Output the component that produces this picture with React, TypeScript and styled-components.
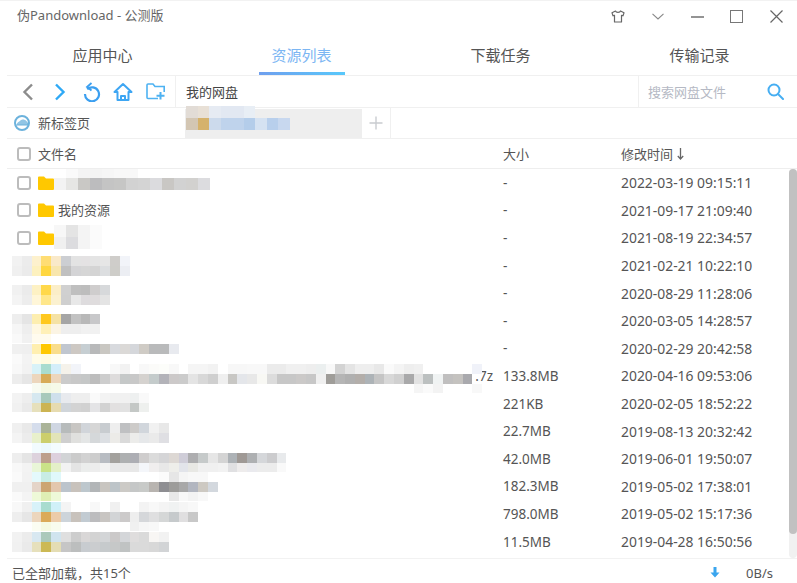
import React from "react";
import styled, { createGlobalStyle } from "styled-components";

const GlobalStyle = createGlobalStyle`
  html, body {
    margin: 0;
    padding: 0;
    background: #fff;
  }
  * {
    box-sizing: border-box;
  }
`;

const Window = styled.div`
  width: 797px;
  height: 583px;
  overflow: hidden;
  display: flex;
  flex-direction: column;
  background: #fff;
  color: #555;
  font-family: "Noto Sans", "Noto Sans CJK SC", sans-serif;
  font-size: 13px;
  border-top: 1px solid #f2f2f2;
`;

const TitleBar = styled.div`
  height: 31px;
  flex: none;
  display: flex;
  align-items: center;
  justify-content: space-between;
  padding-left: 17px;
`;

const Title = styled.span`
  font-size: 13px;
  color: #666;
  padding-bottom: 4px;
`;

const WindowButtons = styled.div`
  display: flex;
  margin-right: 1px;
`;

const WindowButton = styled.div`
  width: 39.5px;
  height: 31px;
  display: flex;
  align-items: center;
  justify-content: center;
  color: #777;
`;

const MainTabs = styled.div`
  height: 43px;
  flex: none;
  margin-left: 3px;
  display: grid;
  grid-template-columns: repeat(4, 199px);
`;

const MainTab = styled.div<{ $active?: boolean }>`
  position: relative;
  display: flex;
  align-items: center;
  justify-content: center;
  padding-top: 2px;
  font-size: 15px;
  color: ${(p) => (p.$active ? "#7cb6f3" : "#555")};

  ${(p) =>
    p.$active &&
    `
    &::after {
      content: "";
      position: absolute;
      left: 57px;
      bottom: 0;
      width: 86px;
      height: 3px;
      background: linear-gradient(90deg, #6f9fee, #58c8fb);
    }
  `}
`;

const Toolbar = styled.div`
  height: 33px;
  flex: none;
  margin-left: 7px;
  display: flex;
  border-top: 1px solid #f0f0f0;
  border-bottom: 1px solid #f0f0f0;
`;

const NavButtons = styled.div`
  width: 169px;
  flex: none;
  display: flex;
  align-items: center;
  padding-left: 11.5px;
  gap: 12.5px;
  border-right: 1px solid #f0f0f0;
`;

const PathLabel = styled.div`
  flex: 1;
  display: flex;
  align-items: center;
  padding-left: 10px;
  font-size: 13px;
  color: #444;
`;

const SearchBox = styled.div`
  width: 159px;
  flex: none;
  display: flex;
  align-items: center;
  justify-content: space-between;
  padding: 0 13px 0 9px;
  border-left: 1px solid #f0f0f0;
  font-size: 13px;
  color: #b5b9c4;
`;

const PageTabs = styled.div`
  height: 31px;
  flex: none;
  margin-left: 7px;
  display: flex;
  align-items: stretch;
  border-bottom: 1px solid #f0f0f0;
  position: relative;
`;

const PageTab = styled.div`
  width: 178px;
  flex: none;
  display: flex;
  align-items: center;
  gap: 8px;
  padding-left: 7px;
  padding-bottom: 1px;
  font-size: 13px;
  color: #555;
`;

const ActivePageTab = styled.div`
  width: 177px;
  flex: none;
  background: #eeeeee;
  margin-top: 1px;
`;

const AddTab = styled.div`
  width: 29px;
  flex: none;
  display: flex;
  align-items: center;
  justify-content: center;
  border-right: 1px solid #f0f0f0;
`;

const ListHeader = styled.div`
  height: 30px;
  flex: none;
  margin-left: 7px;
  display: grid;
  grid-template-columns: 486px 118px 1fr;
  align-items: center;
  padding-left: 10px;
  border-bottom: 1px solid #eeeeee;
  font-size: 13px;
  color: #555;
`;

const NameHead = styled.div`
  display: flex;
  align-items: center;
  gap: 7px;
`;

const SortHead = styled.div`
  display: flex;
  align-items: center;
  gap: 4px;
`;

const Checkbox = styled.span`
  width: 14px;
  height: 14px;
  flex: none;
  display: block;
  border: 2px solid #bcbcbc;
  border-radius: 3px;
  background: #fff;
`;

const ListBody = styled.div`
  flex: 1;
  min-height: 0;
  display: flex;
`;

const Rows = styled.div`
  flex: 1;
  min-width: 0;
  overflow: hidden;
`;

const Row = styled.div`
  height: 27.6px;
  position: relative;
  display: grid;
  grid-template-columns: 503px 118px 1fr;
  align-items: center;
  font-size: 13px;
  color: #555;
`;

const NameCell = styled.div`
  display: flex;
  align-items: center;
  padding-left: 17px;
  padding-right: 10px;
`;

const FolderName = styled.span`
  margin-left: 4px;
  padding-bottom: 1px;
`;

const FolderSlot = styled.span`
  display: flex;
  margin-left: 7px;
`;

const FileExt = styled.span`
  margin-left: auto;
  font-size: 13.5px;
`;

const SizeCell = styled.span`
  font-size: 13.5px;
`;

const TimeCell = styled.span`
  font-size: 13.9px;
`;

const Mosaic = styled.div<{ $x: number; $y: number }>`
  position: absolute;
  left: ${(p) => p.$x}px;
  top: ${(p) => p.$y}px;
  display: flex;
  flex-direction: column;
  filter: blur(0.4px);
`;

const MosaicLine = styled.div`
  display: flex;
`;

const MosaicCell = styled.span<{ $w: number; $h: number }>`
  display: block;
  flex: none;
  width: ${(p) => p.$w}px;
  height: ${(p) => p.$h}px;
`;

const TabMosaic = styled(Mosaic)`
  z-index: 1;
`;

const ScrollTrack = styled.div`
  width: 8px;
  flex: none;
  background: #f1f1f1;
  border-radius: 4px;
  padding-bottom: 24px;
  display: flex;
`;

const ScrollThumb = styled.div`
  flex: 1;
  background: #c1c1c1;
  border-radius: 4px;
`;

const Footer = styled.div`
  height: 25px;
  flex: none;
  margin-left: 7px;
  display: flex;
  align-items: center;
  justify-content: space-between;
  padding: 3px 24px 0 5px;
  border-top: 1px solid #f2f2f2;
  font-size: 13px;
  color: #555;
`;

const Speed = styled.div`
  display: flex;
  align-items: center;
  gap: 26px;
`;

const Folder = () => (
  <svg width="16" height="14" viewBox="0 0 16 14">
    <path d="M0 1.5A1 1 0 0 1 1 .5h5l2 2h7a1 1 0 0 1 1 1V13a1 1 0 0 1-1 1H1a1 1 0 0 1-1-1z" fill="#ffc800" />
  </svg>
);

type Blur = { x: number; y: number; w?: number; h?: number; lines: string[] };

type FileRow = {
  folder?: boolean;
  name?: string;
  ext?: string;
  size: string;
  time: string;
  blur?: Blur;
};

const gap = (n: number) => "- ".repeat(n);

const files: FileRow[] = [
  {
    folder: true,
    size: "-",
    time: "2022-03-19 09:15:11",
    blur: {
      x: 54,
      y: 166,
      w: 12,
      h: 12,
      lines: [
        "- fafafa f4f4f4 f4f4f4 f6f6f6 f8f8f8 f8f8f8",
        "f3f3f3 e6e6e4 c9c8c5 bcbcbe c4c4c4 c6c6c5 d2d2d2 d4d4d4 dbdbde c9c7c4 d2d2d2 d2d1cf dcdcdf",
      ],
    },
  },
  { folder: true, name: "我的资源", size: "-", time: "2021-09-17 21:09:40" },
  {
    folder: true,
    size: "-",
    time: "2021-08-19 22:34:57",
    blur: {
      x: 54,
      y: 225,
      w: 12,
      h: 12,
      lines: ["f7f7f7 e4e4e4 f4f4f4 fbfbfb", "f0f0f0 dcdcdf f4f4f4 fbfbfb"],
    },
  },
  {
    size: "-",
    time: "2021-02-21 10:22:10",
    blur: {
      x: 12,
      y: 256,
      lines: [
        "f2f2f2 ececec fdf1cd ffdd73 f9e9c9 ccced2 e3e3e3 e4e2e3 e4e4e4 e6e6e6 cfcdca f2f4f9",
        "f0f0f0 ebebeb fdf1bf ffd740 f8e6ad c0c0c0 d4d4d6 d6d6d6 d4d4d4 dcdee0 cecdc9 eceef3",
      ],
    },
  },
  {
    size: "-",
    time: "2020-08-29 11:28:06",
    blur: {
      x: 12,
      y: 285,
      lines: [
        "f1f1f1 ebebeb fdf1c4 ffd84a fbeec8 d0d0d0 bfbfbf bdbdbd cfcdcd d7d9db",
        "f4f4f4 ededed fff6d8 ffe78a fbf1d0 cfcfcf e8e8e8 dedcde dfdcdd e4e4e4",
      ],
    },
  },
  {
    size: "-",
    time: "2020-03-05 14:28:57",
    blur: {
      x: 12,
      y: 314,
      lines: [
        "eeeeee e5e5e5 fdeeb0 ffc81f f5e2a5 a5a5a5 c2c2c2 b8b8b8 c8c8ca",
        "f6f6f6 eeeeee fff8e2 fff0b8 fbf4e4 eeeeee eeeeee f1f1f1 f1f1f1",
        "f9f9f9 f1f1f1 fffbee fffbee",
      ],
    },
  },
  {
    size: "-",
    time: "2020-02-29 20:42:58",
    blur: {
      x: 12,
      y: 344,
      lines: [
        "f0f0f0 efefef ffefb0 ffc800 f9dd8c c0c6cf cdc8c3 c6ced2 b8b9ba c9c7c2 d8dade dbd9d7 d5d7db cfcbc5 b9babb b9babb e8eaef",
        "fafafa f3f3f3 fffce8 fffbe0 fffdf0",
      ],
    },
  },
  {
    ext: ".7z",
    size: "133.8MB",
    time: "2020-04-16 09:53:06",
    blur: {
      x: 12,
      y: 364,
      lines: [
        "f8f8f8 f2f2f2 d8f2f8 a9dccf d4eefa f5f2ea f2f4f9 - - - f8f8f8 f2f2f2 - f8f8f8 fbfbf9 fcfdfa f8f8f8 - f5f5f5 f5f5f5 f2f2f2 - f7f7f7 f7f7f7 f8f8f8 f8f8f8 ebebeb ebebeb f0f0f0 f0f0f0 eeeeee ebefef f8f8f8 d3d3d3 e4e4e4 eeeeee eeeeee e8e8e8 fafafa f4f4f4 eeeeee f0f0f0 - - - - - f0f2f9",
        "ededed e6e6e6 ecd6bd d7ab58 edd6bc cbcbcb c8c8c8 c5c7c7 bdbdbd cdcdcd dedcdc c5c8c8 c8c8c8 d5d2cf c4cbcb b3b3b9 ccc9c9 cbcbcb e4e4e4 d8d8d8 cfcfcf efefef c8c7c4 e4e6ea e8e8e8 f8f8f4 dcdcdc c7c7c7 c7c7c7 cbc9c8 c7c7c7 f0f0f0 9f9d99 b5b5b5 b0b0b0 b3aeaa adb3b7 c5c5c5 d8d8d8 d0d0d0 a9a9aa e2e2e2 bcc0c0 f0f3f3 c0bfbf c4c2bf a9a9ad",
        `${gap(41)}f5f5f5 fafafa f3f3f3 - - - f8f8f8`,
      ],
    },
  },
  {
    size: "221KB",
    time: "2020-02-05 18:52:22",
    blur: {
      x: 12,
      y: 383,
      lines: [
        "- - f8fbf2 f2f8e4 f6fae8",
        "f3f3f3 eeeeee d6e8f0 a8c9bb cfe0ec e8eaee eeeeee eeeeee fafafa f3f3f3 f1f1f1 f1f1f1 eef0f0 f9f9f9",
        "f1f1f1 eaeaea e6e0bc ccb452 e6dbb0 d0d5da d3d3d3 d1d1d1 e4e4e6 d2d2d2 e2e0e0 e2e2e2 c4c8c6 eef0ee",
      ],
    },
  },
  {
    size: "22.7MB",
    time: "2019-08-13 20:32:42",
    blur: {
      x: 12,
      y: 423,
      lines: [
        "f0f0f0 e9e9e9 d5ddec aab398 cfd6e2 b7bbbb c8c6c3 d1d5da d6d6d6 c8ccd0 eeeeee bfc0c2 cdcbc9 d1d6dc f1f1f1 e8e8e8",
        "f4f4f4 ececec e8f0cc ccce6c e2e4b8 cfcfcf e0e0de e4e6e6 d5d8da dcdfe3 ecebe8 dadada ececea e6e8ea eaeaea dfdfe3",
      ],
    },
  },
  {
    size: "42.0MB",
    time: "2019-06-01 19:50:07",
    blur: {
      x: 12,
      y: 443,
      lines: [
        "- - f2fbfe ecf8fc f4fcfe",
        "eeeeee e5e5e5 ddd2dd bd9f8c ddd0dd d2d4d6 cbcbcb d2d2d2 cdcdcd b8bcc2 a3a19d aeb0b1 adaeb4 cfcdcd dbdbdb d5d5d7 ddd8d4 cfcdd8 aeaeb0 c6caca e6e6e6 d4d4d4 adb2b6 9f9995 aeb0b2 d5d7da ccccce e8eaec",
        "f8f8f8 f3f3f3 e9f6d8 cae288 e4f0c8 f2f2f2 e4e4e4 ebedec ededed f2f2f2 e8e8e8 e8e8e8 e8e8e8 f4f6fa f0eeee e8e8e8 eeeeea e2e4ea e8e8e4 f0f0f0 f0f0f0 f2f2f2 e0e0e2 eeecec eaeaee ececec ececec f9f9f9",
      ],
    },
  },
  {
    size: "182.3MB",
    time: "2019-05-02 17:38:01",
    blur: {
      x: 12,
      y: 472,
      lines: [
        `fafafa f2f2f2 e4f9fc c8ece4 e0f8fb ${gap(10)}fbfbfb e6e6e6 f5f5f5 f8f8f8 f8f8f8`,
        "f0f0f0 f0f0f0 e4d4c8 cca572 e3c7ae bcc4cc c8c2bc bdc7cd b2b5b7 c8c5c0 bdc4c8 cccac6 c5c7c7 c8cac8 b8b4b0 8e8e92 9d9c9a a8a8a8 b2b6c0 cdc9c2 d3d8de",
        `fafafa f4f4f4 eef9d8 dfeeb4 eef9d8 ${gap(11)}e8e8e8 f8f8f8 f3f3f3 f8f8f8`,
      ],
    },
  },
  {
    size: "798.0MB",
    time: "2019-05-02 15:17:36",
    blur: {
      x: 12,
      y: 502,
      lines: [
        "f8f8f8 f0f0f0 d8f2f9 a9dccf d0f0f8 f4f4f4 - - f8f8f8 - f0f0f0 - - f3f3f3 f8f8f8 f4f4f4 f0f2f2 f5f5f5 f8f8f8",
        "eeeeee e6e6e6 ecd6bd dbaa58 ecccaa cdd4da c8c2bc c2cbd2 bcbcbe c8c5c2 d2d4d6 cccaca eeeeee d5d7da dfdfe0 d5d7d7 c6cacc e0dfe0 c8c8c8",
        `- - fbfdf2 f5fae2 f8fcee ${gap(7)}f0f0f0 f6f6f6 f8f8f8`,
      ],
    },
  },
  {
    size: "11.5MB",
    time: "2019-04-28 16:50:56",
    blur: {
      x: 12,
      y: 532,
      lines: [
        "f2f2f2 ececec d8e8f1 abc9bb d0e4ef dfdfdf cdcdcd d9d7d7 d3d3d3 d3d5d7 cbc9c9 d4d6d9 dfdddd dadada f8f6f4 f2f2f2",
        "f1f1f1 eaeaea e6e0bc ccb955 e4ddb4 c6c6c6 bcbebe c8ccd0 cbcdcf c6cacc c6c8c8 c0c3c3 dadada dadada d8d8d8 d2d4d6",
      ],
    },
  },
];

const FIRST_ROW_TOP = 169;
const ROW_HEIGHT = 27.6;

const BlurLines = ({ lines, w = 9.8, h = 9.8 }: { lines: string[]; w?: number; h?: number }) => (
  <>
    {lines.map((line, i) => (
      <MosaicLine key={i}>
        {line
          .trim()
          .split(" ")
          .map((c, j) => (
            <MosaicCell
              key={j}
              $w={w}
              $h={h}
              style={{ backgroundColor: c === "-" ? "transparent" : `#${c}` }}
            />
          ))}
      </MosaicLine>
    ))}
  </>
);

const App: React.FC = () => {
  return (
    <Window>
      <GlobalStyle />
      <TitleBar>
        <Title>伪Pandownload - 公测版</Title>
        <WindowButtons>
          <WindowButton>
            <svg width="14" height="13" viewBox="0 0 14 13" fill="none" stroke="#666" strokeWidth="1.2" strokeLinejoin="round">
              <path d="M4.5 1 1 2.8l1 3 1.5-.5V12h7V5.3l1.5.5 1-3L9.5 1C9 2.8 5 2.8 4.5 1z" />
            </svg>
          </WindowButton>
          <WindowButton>
            <svg width="12" height="7" viewBox="0 0 12 7" fill="none" stroke="#888" strokeWidth="1.1">
              <path d="M.5.8 6 6l5.500-5.200" />
            </svg>
          </WindowButton>
          <WindowButton>
            <svg width="13" height="2" viewBox="0 0 13 2">
              <path d="M0 1h13" stroke="#666" strokeWidth="1.4" />
            </svg>
          </WindowButton>
          <WindowButton>
            <svg width="13" height="13" viewBox="0 0 13 13" fill="none" stroke="#777" strokeWidth="1">
              <rect x=".5" y=".5" width="12" height="12" />
            </svg>
          </WindowButton>
          <WindowButton>
            <svg width="13" height="13" viewBox="0 0 13 13" fill="none" stroke="#666" strokeWidth="1.2">
              <path d="m.5.500 12 12M12.500.500l-12 12" />
            </svg>
          </WindowButton>
        </WindowButtons>
      </TitleBar>

      <MainTabs>
        <MainTab>应用中心</MainTab>
        <MainTab $active>资源列表</MainTab>
        <MainTab>下载任务</MainTab>
        <MainTab>传输记录</MainTab>
      </MainTabs>

      <Toolbar>
        <NavButtons>
          <svg width="19" height="20" viewBox="0 0 19 20" fill="none" stroke="#8c8c8c" strokeWidth="2.400">
            <path d="M13 2.500 5.500 10l7.500 7.500" />
          </svg>
          <svg width="19" height="20" viewBox="0 0 19 20" fill="none" stroke="#2ea9f6" strokeWidth="2.400">
            <path d="M6 2.500 13.500 10 6 17.500" />
          </svg>
          <svg width="19" height="20" viewBox="0 0 19 20" fill="none" stroke="#3b9ff0" strokeWidth="2.200">
            <path d="M5.200 7.200A7 7 0 1 1 3 12" />
            <path d="M9.500 1 5 5l4.500 3.500" strokeWidth="1.800" />
          </svg>
          <svg width="20" height="20" viewBox="0 0 20 20" fill="none" stroke="#3ea6f3" strokeWidth="2">
            <path d="M1.500 10 10 2l8.500 8h-3v8h-11v-8zM8 18v-4h4v4" strokeLinejoin="round" />
          </svg>
          <svg width="20" height="18" viewBox="0 0 20 18" fill="none" stroke="#4eb2f2" strokeWidth="1.600">
            <path d="M12 15.500H2a1 1 0 0 1-1-1V2a1 1 0 0 1 1-1h5l2 2.500h9.200V9" />
            <path d="M14.500 9v7.500M10.500 12.800h8" strokeWidth="2" />
          </svg>
        </NavButtons>
        <PathLabel>我的网盘</PathLabel>
        <SearchBox>
          搜索网盘文件
          <svg width="17" height="17" viewBox="0 0 17 17" fill="none" stroke="#46aef2" strokeWidth="2">
            <circle cx="7" cy="7" r="5.500" />
            <path d="m11 11 5 5" strokeLinecap="round" />
          </svg>
        </SearchBox>
      </Toolbar>

      <PageTabs>
        <PageTab>
          <svg width="16" height="16" viewBox="0 0 16 16">
            <circle cx="8" cy="8" r="7" fill="none" stroke="#6cb2dc" strokeWidth="2" />
            <path d="M2 10.500C3 7.500 5 6.800 6.500 5.500 8.500 3.800 12 4.500 13 7c1 .5 1.500 2 1 3.500z" fill="#6cb2dc" />
            <path d="M2.500 9.500C4 6.500 6 6 7.500 5c2-1 4-.2 5 1.800.5.500 1.200 1.500 1 2.700z" fill="#fff" opacity="0.25" />
          </svg>
          新标签页
        </PageTab>
        <ActivePageTab />
        <AddTab>
          <svg width="14" height="14" viewBox="0 0 14 14">
            <path d="M7 .5v13M.5 7h13" stroke="#c9ccd0" strokeWidth="1.400" />
          </svg>
        </AddTab>
        <TabMosaic $x={179} $y={-2}>
          <BlurLines
            w={11.500}
            h={12}
            lines={[
              "e2dcd6 e8e0d6 e6ebf3 e2e8f2 e2e8f2 e8eef5",
              "d3c6b3 d5b26c ccdaec bfd3ec bfd3ec b4cdea d5e2f2 b8cfec c8d8ef",
            ]}
          />
        </TabMosaic>
      </PageTabs>

      <ListHeader>
        <NameHead>
          <Checkbox />
          文件名
        </NameHead>
        <span>大小</span>
        <SortHead>
          修改时间
          <svg width="7" height="12" viewBox="0 0 7 12" fill="none" stroke="#666" strokeWidth="1.300">
            <path d="M3.500 0v11M.8 8l2.700 3L6.200 8" />
          </svg>
        </SortHead>
      </ListHeader>

      <ListBody>
        <Rows>
          {files.map((file, i) => (
            <Row key={file.time}>
              <NameCell>
                {file.folder && (
                  <>
                    <Checkbox />
                    <FolderSlot>
                      <Folder />
                    </FolderSlot>
                  </>
                )}
                {file.name && <FolderName>{file.name}</FolderName>}
                {file.ext && <FileExt>{file.ext}</FileExt>}
              </NameCell>
              <SizeCell>{file.size}</SizeCell>
              <TimeCell>{file.time}</TimeCell>
              {file.blur && (
                <Mosaic $x={file.blur.x} $y={file.blur.y - (FIRST_ROW_TOP + i * ROW_HEIGHT)}>
                  <BlurLines lines={file.blur.lines} w={file.blur.w} h={file.blur.h} />
                </Mosaic>
              )}
            </Row>
          ))}
        </Rows>
        <ScrollTrack>
          <ScrollThumb />
        </ScrollTrack>
      </ListBody>

      <Footer>
        <span>已全部加载，共15个</span>
        <Speed>
          <svg width="10" height="11" viewBox="0 0 10 11">
            <path d="M3.500 0h3v5.500H9.500L5 10.500.5 5.500h3z" fill="#3aa5ee" />
          </svg>
          0B/s
        </Speed>
      </Footer>
    </Window>
  );
};

export default App;
